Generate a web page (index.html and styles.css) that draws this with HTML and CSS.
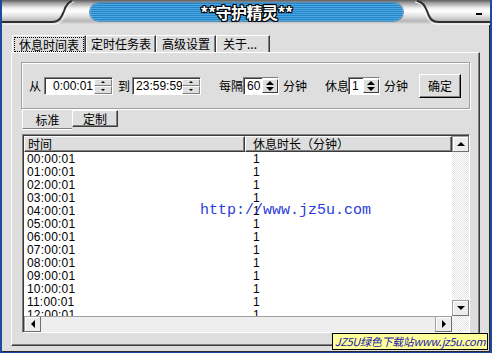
FILE: index.html
```html
<!DOCTYPE html>
<html lang="zh-CN">
<head>
    <meta charset="UTF-8">
    <title>守护精灵</title>
    <link rel="stylesheet" href="styles.css">
</head>
<body>
    <div class="window">
        <div class="titlebar">
            <svg class="swoop" width="88" height="25" viewBox="0 0 88 25">
                <path d="M0 22 H50 C58 22 60 16 62 11 C64 5 66 2 70 1" fill="none" stroke="#2e2e2e" stroke-width="2"/>
                <path d="M0 24 H52 C60 24 62 18 64 12 C66 6 68 3 72 2" fill="none" stroke="#fafafa" stroke-width="1"/>
            </svg>
            <div class="pill"><span class="title">**守护精灵**</span></div>
            <svg class="swoop" width="87" height="25" viewBox="0 0 87 25">
                <path d="M14 1 C20 2 22 6 24 11 C26 17 28 22 36 22 H87" fill="none" stroke="#2e2e2e" stroke-width="2"/>
                <path d="M12 2 C18 3 20 7 22 12 C24 18 26 24 34 24 H87" fill="none" stroke="#fafafa" stroke-width="1"/>
                <rect x="73" y="13" width="6" height="2" fill="#000"/>
            </svg>
        </div>

        <div class="body">
            <div class="tabs">
                <div class="tab tab-main active"><span class="focus">休息时间表</span></div>
                <div class="tab tab-task">定时任务表</div>
                <div class="tab tab-adv">高级设置</div>
                <div class="tab tab-about">关于...</div>
            </div>

            <div class="panel">
                <div class="group">
                    <span class="lbl lbl-from">从</span>
                    <div class="spin spin-time">
                        <div class="field">0:00:01</div>
                        <div class="half-btns"><div class="hb up"></div><div class="hb down"></div></div>
                    </div>
                    <span class="lbl lbl-to">到</span>
                    <div class="spin spin-time spin-to">
                        <div class="field">23:59:59</div>
                        <div class="half-btns"><div class="hb up"></div><div class="hb down"></div></div>
                    </div>
                    <span class="lbl lbl-every">每隔</span>
                    <div class="spin spin-num spin-every">
                        <div class="field">60</div>
                        <div class="updown"><span class="tri-up"></span><span class="tri-down"></span></div>
                    </div>
                    <span class="lbl lbl-min">分钟</span>
                    <span class="lbl lbl-rest">休息</span>
                    <div class="spin spin-num spin-rest">
                        <div class="field">1</div>
                        <div class="updown"><span class="tri-up"></span><span class="tri-down"></span></div>
                    </div>
                    <span class="lbl lbl-min">分钟</span>
                    <button class="ok-button">确定</button>
                </div>

                <div class="subtabs">
                    <div class="subtab current">标准</div>
                    <div class="subtab">定制</div>
                </div>

                <div class="list">
                    <div class="list-main">
                        <div class="list-head">
                            <div class="col col-time">时间</div>
                            <div class="col col-rest">休息时长（分钟）</div>
                        </div>
                        <div class="rows" id="rows"></div>
                    </div>
                    <div class="vscroll">
                        <div class="sbtn"><span class="tri-up"></span></div>
                        <div class="track"></div>
                        <div class="sbtn"><span class="tri-down"></span></div>
                    </div>
                    <div class="hscroll">
                        <div class="sbtn"><span class="tri-left"></span></div>
                        <div class="track"></div>
                        <div class="sbtn"><span class="tri-right"></span></div>
                    </div>
                    <div class="corner"></div>
                </div>
            </div>
        </div>

        <div class="watermark">http://www.jz5u.com</div>
        <div class="badge">JZ5U绿色下载站www.jz5u.com</div>
    </div>

    <script>
        // fill the schedule list: one row per hour
        var rows = document.getElementById('rows');
        for (var h = 0; h < 13; h++) {
            var row = document.createElement('div');
            row.className = 'row';
            var t = (h < 10 ? '0' + h : h) + ':00:01';
            row.innerHTML = '<span class="cell-time">' + t + '</span><span class="cell-rest">1</span>';
            rows.appendChild(row);
        }
    </script>
</body>
</html>
```

FILE: styles.css
```css
:root {
    --face: #dedede;
    --light: #ffffff;
    --shadow: #808080;
    --dark: #3c3c3c;
    --frame-blue: #1b4c9c;
}

* {
    box-sizing: border-box;
}

body {
    margin: 0;
    font-family: "Noto Sans CJK SC", "Liberation Sans", sans-serif;
    font-size: 12px;
    color: #000;
    background: var(--face);
}

.window {
    position: relative;
    width: 492px;
    height: 353px;
    border-left: 2px solid var(--frame-blue);
    border-right: 2px solid var(--frame-blue);
    border-bottom: 1px solid var(--frame-blue);
    background: var(--face);
    overflow: hidden;
}

/* title bar */
.titlebar {
    display: flex;
    height: 25px;
    background: linear-gradient(to bottom, #5e5e5e 0, #a0a0a0 3px, #eeeeee 8px, #fff 11px, #e2e2e2 16px, #b6b6b6 21px, #cfcfcf 23px, #e6e6e6 25px);
}

.swoop {
    display: block;
    flex: none;
}

.pill {
    width: 313px;
    height: 18px;
    margin-top: 3px;
    border-radius: 9px;
    background: repeating-linear-gradient(to bottom, #2585c8 0, #2585c8 1px, #4ba7e2 1px, #4ba7e2 2px);
    box-shadow: 0 0 0 1px #5c8fb8;
    display: flex;
    align-items: center;
    justify-content: center;
}

.title {
    color: #fff;
    font-size: 16px;
    font-weight: bold;
    line-height: 18px;
    letter-spacing: -0.5px;
    text-shadow: 1px 0 #000, -1px 0 #000, 0 1px #000, 0 -1px #000,
                 1px 1px #000, -1px -1px #000, 1px -1px #000, -1px 1px #000;
}

/* main body */
.body {
    height: 327px;
    border-right: 1px solid #2a2a2a;
    border-bottom: 1px solid #2a2a2a;
    padding-top: 10px;
}

.tabs {
    display: flex;
    height: 17px;
    margin-left: 10px;
}

.tab {
    height: 17px;
    border-top: 1px solid var(--light);
    border-left: 1px solid var(--light);
    border-right: 1px solid var(--dark);
    box-shadow: inset -1px 0 var(--shadow);
    display: flex;
    align-items: center;
    justify-content: center;
    line-height: 14px;
}

.tab-main { width: 74px; }
.tab-task { width: 70px; }
.tab-adv { width: 60px; }
.tab-about { width: 54px; justify-content: flex-start; padding-left: 6px; }

.focus {
    outline: 1px dotted #000;
    padding: 0 4px;
    line-height: 13px;
}

.panel {
    width: 469px;
    height: 294px;
    margin-left: 9px;
    border-top: 1px solid var(--light);
    border-left: 1px solid var(--light);
    border-right: 1px solid var(--dark);
    border-bottom: 1px solid var(--dark);
    box-shadow: inset -1px -1px var(--shadow);
    padding: 9px 0 0 9px;
}

/* settings group */
.group {
    width: 449px;
    height: 47px;
    border: 1px solid #a0a0a0;
    box-shadow: inset 1px 1px var(--light), 1px 1px var(--light);
    display: flex;
    align-items: center;
    padding-left: 7px;
}

.lbl {
    white-space: nowrap;
    line-height: 16px;
}

.lbl-from { margin-right: 3px; }
.lbl-to { margin: 0 2px 0 5px; }
.lbl-every { margin-left: 18px; }
.lbl-min { margin-left: 4px; }
.lbl-rest { margin-left: 18px; margin-right: -1px; }

.spin {
    display: flex;
    height: 18px;
    border-top: 1px solid var(--shadow);
    border-left: 1px solid var(--shadow);
    border-right: 1px solid var(--light);
    border-bottom: 1px solid var(--light);
    background: #fff;
}

.spin .field {
    flex: 1;
    border-top: 1px solid var(--dark);
    border-left: 1px solid var(--dark);
    font-family: "Liberation Sans", sans-serif;
    font-size: 12px;
    line-height: 15px;
    padding-left: 2px;
    overflow: hidden;
    white-space: nowrap;
}

.spin-time { width: 69px; }
.spin-time .field { text-align: right; padding-right: 1px; }
.spin-to .field { text-align: left; }
.spin-every { width: 36px; }
.spin-rest { width: 32px; }

.half-btns {
    width: 18px;
    display: flex;
    flex-direction: column;
    border-top: 1px solid var(--dark);
}

.hb {
    flex: 1;
    background: var(--face);
    border-top: 1px solid var(--light);
    border-left: 1px solid var(--light);
    border-right: 1px solid var(--shadow);
    border-bottom: 1px solid var(--shadow);
    display: flex;
    align-items: center;
    justify-content: center;
}

.hb.up::after {
    content: "";
    border: 2px solid transparent;
    border-top: 0;
    border-bottom: 2px solid #000;
}

.hb.down::after {
    content: "";
    border: 2px solid transparent;
    border-bottom: 0;
    border-top: 2px solid #000;
}

.updown {
    width: 16px;
    margin: 1px 0;
    background: var(--face);
    border-top: 1px solid var(--light);
    border-left: 1px solid var(--light);
    border-right: 1px solid var(--dark);
    border-bottom: 1px solid var(--dark);
    display: flex;
    flex-direction: column;
    align-items: center;
    justify-content: center;
    gap: 2px;
}

.tri-up, .tri-down, .tri-left, .tri-right {
    display: block;
    width: 0;
    height: 0;
}

.tri-up {
    border-left: 4px solid transparent;
    border-right: 4px solid transparent;
    border-bottom: 4px solid #000;
}

.tri-down {
    border-left: 4px solid transparent;
    border-right: 4px solid transparent;
    border-top: 4px solid #000;
}

.tri-left {
    border-top: 4px solid transparent;
    border-bottom: 4px solid transparent;
    border-right: 4px solid #000;
}

.tri-right {
    border-top: 4px solid transparent;
    border-bottom: 4px solid transparent;
    border-left: 4px solid #000;
}

.ok-button {
    width: 42px;
    height: 24px;
    margin-left: 11px;
    padding: 0;
    font: inherit;
    background: var(--face);
    border-top: 1px solid var(--light);
    border-left: 1px solid var(--light);
    border-right: 1px solid #000;
    border-bottom: 1px solid #000;
    box-shadow: inset -1px -1px var(--shadow);
}

/* sub tabs */
.subtabs {
    display: flex;
    height: 20px;
    margin-left: 1px;
}

.subtab {
    height: 20px;
    display: flex;
    align-items: center;
    justify-content: center;
    line-height: 16px;
}

.subtab.current {
    width: 50px;
    border-left: 1px solid var(--light);
    border-bottom: 1px solid var(--shadow);
    box-shadow: 0 1px var(--light);
    padding-top: 2px;
}

.subtab:not(.current) {
    width: 46px;
    height: 17px;
    margin-top: 1px;
    border-top: 1px solid var(--light);
    border-left: 1px solid var(--light);
    border-right: 1px solid var(--dark);
    border-bottom: 1px solid var(--dark);
    box-shadow: inset -1px -1px var(--shadow);
}

/* list view */
.list {
    width: 448px;
    height: 199px;
    margin: 5px 0 0 1px;
    border-top: 1px solid var(--shadow);
    border-left: 1px solid var(--shadow);
    border-right: 1px solid var(--light);
    border-bottom: 1px solid var(--light);
    box-shadow: inset 1px 1px var(--dark);
    padding: 1px 0 0 1px;
    background: #fff;
    display: grid;
    grid-template-columns: 1fr 17px;
    grid-template-rows: 1fr 16px;
}

.list-main {
    overflow: hidden;
}

.list-head {
    display: flex;
    height: 16px;
    background: var(--face);
}

.col {
    height: 16px;
    border-top: 1px solid var(--light);
    border-left: 1px solid var(--light);
    border-right: 1px solid var(--dark);
    border-bottom: 1px solid var(--dark);
    box-shadow: inset -1px -1px var(--shadow);
    line-height: 14px;
    white-space: nowrap;
}

.col-time { width: 221px; padding-left: 3px; }
.col-rest { flex: 1; padding-left: 7px; }

.rows {
    padding-top: 1px;
    font-family: "Liberation Sans", sans-serif;
    font-size: 12px;
}

.row {
    display: flex;
    height: 13px;
    line-height: 13px;
}

.cell-time { width: 221px; padding-left: 3px; letter-spacing: 0.2px; }
.cell-rest { padding-left: 8px; }

.vscroll {
    display: flex;
    flex-direction: column;
}

.hscroll {
    display: flex;
}

.track {
    flex: 1;
    background-color: #f2f2f2;
    background-image: repeating-conic-gradient(#fff 0 25%, #e4e4e4 0 50%);
    background-size: 2px 2px;
}

.hscroll .track {
    background: #eeeeee;
    border-top: 1px solid #a0a0a0;
}

.sbtn {
    width: 17px;
    height: 16px;
    flex: none;
    background: #ececec;
    border-top: 1px solid #a0a0a0;
    border-left: 1px solid #a0a0a0;
    border-right: 1px solid #707070;
    border-bottom: 1px solid #707070;
    box-shadow: inset 1px 1px var(--light);
    display: flex;
    align-items: center;
    justify-content: center;
}

.corner {
    background-image: repeating-conic-gradient(#fff 0 25%, #e4e4e4 0 50%);
    background-size: 2px 2px;
}

/* overlays */
.watermark {
    position: absolute;
    left: 198px;
    top: 202px;
    font-family: "Liberation Mono", monospace;
    font-size: 15px;
    color: #2c3cdc;
}

.badge {
    position: absolute;
    left: 330px;
    top: 333px;
    width: 156px;
    height: 17px;
    background: #ffff99;
    border: 1px solid #000;
    color: #1a1aa8;
    font-style: italic;
    font-size: 11px;
    line-height: 15px;
    text-align: center;
    white-space: nowrap;
    letter-spacing: -0.3px;
}
```
